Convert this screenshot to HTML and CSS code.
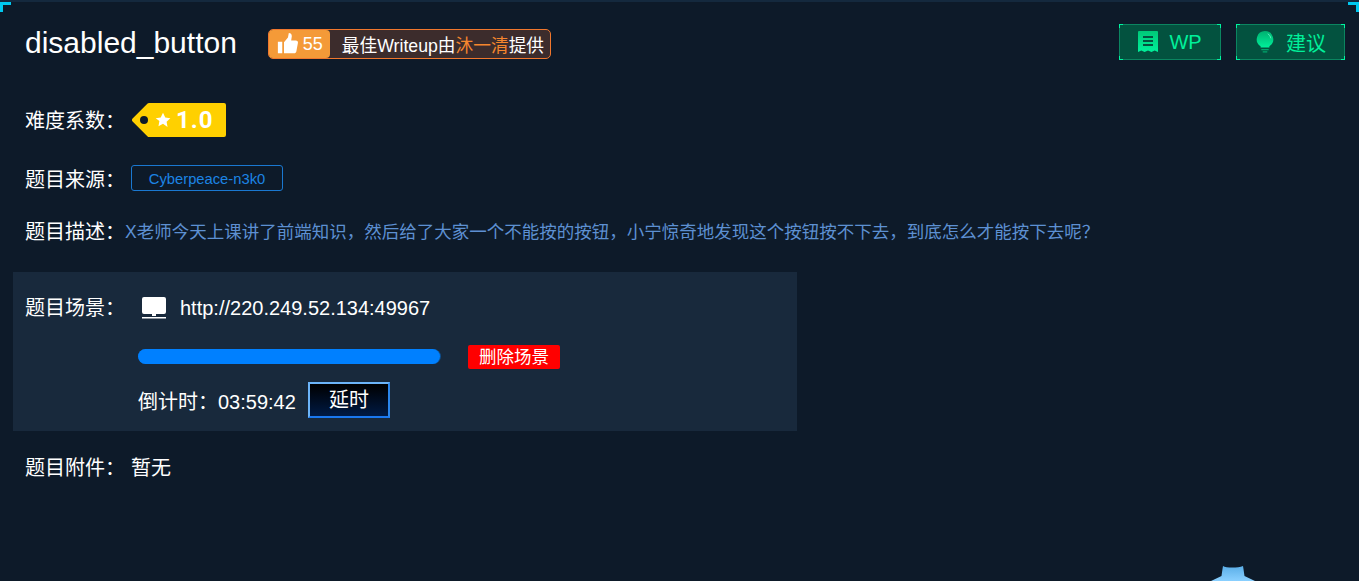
FILE: index.html
```html
<!DOCTYPE html>
<html lang="zh-CN">
<head>
    <meta charset="UTF-8">
    <title>disabled_button</title>
    <link rel="stylesheet" href="styles.css">
</head>
<body>
    <div class="panel">
        <span class="corner corner-left"></span>
        <span class="corner corner-right"></span>

        <header class="head">
            <h1>disabled_button</h1>
            <div class="best">
                <span class="best-like">
                    <svg class="thumb" viewBox="0 0 24 24"><path d="M1 10h5v13H1zM8 10.500l4.500-5.500 1-5c2.500 0 3.800 2 3.300 4.500L16.200 8.500h5.300c1.800 0 2.700 1.300 2.400 3l-1.800 9.500c-.3 1.300-1.200 2-2.500 2H8z"/></svg>
                    55
                </span>
                <span class="best-text">最佳Writeup由<em>沐一清</em>提供</span>
            </div>
            <div class="head-btns">
                <a class="green-btn btn-wp">
                    <i></i><i></i><i></i><i></i>
                    <svg class="green-icon" viewBox="0 0 20 22"><defs><linearGradient id="g1" x1="0" y1="0" x2="0" y2="1"><stop offset="0" stop-color="#00c878"/><stop offset="1" stop-color="#00f09a"/></linearGradient></defs><path fill="url(#g1)" fill-rule="evenodd" d="M0 1a1 1 0 0 1 1-1h18a1 1 0 0 1 1 1v20l-3.300-1.500-3.300 1.500-3.400-1.500-3.400 1.500-3.300-1.500L0 21zM5 5v2h10V5zM5 9v2h10V9zM5 13v2h10v-2z"/></svg>
                    WP
                </a>
                <a class="green-btn btn-tip">
                    <i></i><i></i><i></i><i></i>
                    <svg class="green-icon" viewBox="0 0 20 24"><defs><linearGradient id="g2" x1="0" y1="0" x2="0" y2="1"><stop offset="0" stop-color="#00b070"/><stop offset="1" stop-color="#00f09a"/></linearGradient></defs><path fill="url(#g2)" d="M10 0a9 9 0 0 1 4.800 16.600V18H5.200v-1.400A9 9 0 0 1 10 0z"/><path fill="none" stroke="#5ff0c0" stroke-width="1" d="M13 3a6.500 6.500 0 0 1 3.400 5"/><path fill="#00a86c" d="M6 19.500h8V21H6zM7.500 22h5v1.500h-5z"/></svg>
                    建议
                </a>
            </div>
        </header>

        <div class="row row-level">
            <span class="label">难度系数：</span>
            <span class="tag-level">
                <svg class="tag-shape" viewBox="0 0 94 34"><path fill="#ffd000" stroke="#ffd000" stroke-width="4" stroke-linejoin="round" d="M2 17L17 2H92V32H17z"/><circle cx="12" cy="17" r="4" fill="#0d1a29"/></svg>
                <svg class="star" viewBox="0 0 24 24"><path d="M12 1l3.400 7.200 7.600 1-5.600 5.400 1.400 7.900L12 17.700l-6.800 3.800 1.400-7.900L1 9.200l7.600-1z"/></svg>
                <span class="tag-num">1.0</span>
            </span>
        </div>

        <div class="row row-source">
            <span class="label">题目来源：</span>
            <span class="source">Cyberpeace-n3k0</span>
        </div>

        <div class="row row-desc">
            <span class="label">题目描述：</span>
            <span class="desc">X老师今天上课讲了前端知识，然后给了大家一个不能按的按钮，小宁惊奇地发现这个按钮按不下去，到底怎么才能按下去呢？</span>
        </div>

        <div class="scene">
            <span class="label">题目场景：</span>
            <div class="scene-body">
                <div class="scene-url">
                    <svg class="screen" viewBox="0 0 24 22"><path d="M2 0h20a2 2 0 0 1 2 2v13a2 2 0 0 1-2 2H14v2h-4v-2H2a2 2 0 0 1-2-2V2a2 2 0 0 1 2-2zM0 20h24v1.500H0z"/></svg>
                    <span>http://220.249.52.134:49967</span>
                </div>
                <div class="scene-progress">
                    <div class="bar"><div class="bar-fill"></div></div>
                    <span class="del">删除场景</span>
                </div>
                <div class="scene-time">
                    <span>倒计时：03:59:42</span>
                    <span class="delay">延时</span>
                </div>
            </div>
        </div>

        <div class="row row-files">
            <span class="label">题目附件：</span>
            <span class="files">暂无</span>
        </div>

        <svg class="badge" viewBox="0 0 44 15"><defs><linearGradient id="g3" x1="0" y1="0" x2="0" y2="1"><stop offset="0" stop-color="#5aaee8"/><stop offset="1" stop-color="#8ad0ff"/></linearGradient></defs><path fill="url(#g3)" d="M12 0c3 2 15 2 20 0 .6 3 1 7 1.500 10L44 15H0l10.500-5C11 7 11.400 3 12 0z"/></svg>
    </div>
</body>
</html>
```

FILE: styles.css
```css
* {
    margin: 0;
    padding: 0;
    box-sizing: border-box;
}

html, body {
    height: 100%;
    overflow: hidden;
}

body {
    background: #0d1a29;
    color: #fff;
    font-family: "Liberation Sans", "Noto Sans CJK SC", sans-serif;
    font-size: 20px;
}

.panel {
    position: relative;
    height: 581px;
    padding: 1px 13px 0;
    border-top: 2px solid #14293e;
}

.corner {
    position: absolute;
    top: 0;
    width: 11px;
    height: 10px;
    border-top: 3px solid #00c8f0;
}

.corner-left {
    left: 0;
    border-left: 3px solid #00c8f0;
}

.corner-right {
    right: 0;
    border-right: 3px solid #00c8f0;
}

/* header */
.head {
    display: flex;
    align-items: flex-start;
    height: 98px;
    padding-left: 12px;
}

.head h1 {
    font-size: 30px;
    font-weight: normal;
    margin-top: 23px;
    margin-right: 31px;
}

.best {
    display: flex;
    align-items: center;
    width: 283px;
    height: 30px;
    margin-top: 26px;
    background: #3c2c2c;
    border: 1px solid #f0772d;
    border-radius: 5px;
    overflow: hidden;
}

.best-like {
    display: flex;
    align-items: center;
    width: 61px;
    height: 100%;
    padding-left: 8px;
    background: #f49a38;
    border-radius: 0 4px 4px 0;
    font-size: 18px;
    gap: 5px;
}

.thumb {
    width: 21px;
    height: 21px;
    fill: #fff;
    margin-bottom: 2px;
}

.best-text {
    margin-left: 12px;
    font-size: 17.7px;
    white-space: nowrap;
}

.best-text em {
    font-style: normal;
    color: #f5862e;
}

.head-btns {
    display: flex;
    gap: 15px;
    margin-left: auto;
    margin-top: 21px;
    margin-right: 1px;
}

.green-btn {
    position: relative;
    display: flex;
    align-items: center;
    justify-content: center;
    gap: 11px;
    height: 36px;
    background: #03523f;
    border: 1px solid #0b8560;
    color: #00f09a;
    font-size: 20px;
}

.btn-wp {
    width: 102px;
}

.btn-tip {
    width: 109px;
}

.green-btn i {
    position: absolute;
    width: 4px;
    height: 4px;
    border: 0 solid #00f5a0;
}

.green-btn i:nth-child(1) { top: -1px; left: -1px; border-width: 1px 0 0 1px; }
.green-btn i:nth-child(2) { top: -1px; right: -1px; border-width: 1px 1px 0 0; }
.green-btn i:nth-child(3) { bottom: -1px; left: -1px; border-width: 0 0 1px 1px; }
.green-btn i:nth-child(4) { bottom: -1px; right: -1px; border-width: 0 1px 1px 0; }

.green-icon {
    width: 20px;
    height: 22px;
}

/* rows */
.row {
    display: flex;
    align-items: center;
    padding-left: 12px;
}

.label {
    flex-shrink: 0;
    width: 106px;
    color: #fff;
}

.row-level {
    height: 36px;
}

.tag-level {
    position: relative;
    display: flex;
    align-items: center;
    gap: 5px;
    width: 94px;
    height: 34px;
    margin-left: 1px;
    margin-top: 2px;
    padding-left: 23px;
}

.tag-shape {
    position: absolute;
    left: 0;
    top: 0;
    width: 94px;
    height: 34px;
}

.tag-num {
    position: relative;
    font-family: Roboto, sans-serif;
    font-size: 24px;
    font-weight: bold;
    letter-spacing: 1px;
}

.star {
    position: relative;
    width: 16px;
    height: 16px;
    fill: #fff;
}

.row-source {
    height: 28px;
    margin-top: 27px;
}

.source {
    width: 152px;
    height: 26px;
    line-height: 26px;
    text-align: center;
    border: 1px solid #1a78d0;
    border-radius: 3px;
    color: #1c84e4;
    font-size: 14.75px;
}

.row-desc {
    height: 28px;
    margin-top: 24px;
}

.row-desc .label {
    width: 100px;
}

.desc {
    color: #5d90d2;
    font-size: 17.5px;
    white-space: nowrap;
}

/* scene box */
.scene {
    display: flex;
    width: 784px;
    height: 159px;
    margin-top: 28px;
    padding: 20px 12px 0;
    background: #18293c;
}

.scene .label {
    width: 113px;
    line-height: 32px;
}

.scene-body {
    display: flex;
    flex-direction: column;
}

.scene-url {
    display: flex;
    align-items: center;
    gap: 14px;
    height: 32px;
    padding-left: 4px;
}

.screen {
    width: 24px;
    height: 22px;
    fill: #fff;
}

.scene-progress {
    display: flex;
    align-items: center;
    gap: 27px;
    margin-top: 21px;
}

.bar {
    width: 303px;
    height: 15px;
    margin-bottom: 1px;
    background: #0d4f8f;
    border-radius: 8px;
}

.bar-fill {
    width: 302px;
    height: 15px;
    background: #0080ff;
    border-radius: 8px;
}

.del {
    width: 92px;
    height: 24px;
    line-height: 24px;
    text-align: center;
    background: #ff0000;
    border-radius: 2px;
    font-size: 17.5px;
}

.scene-time {
    display: flex;
    align-items: center;
    gap: 12px;
    margin-top: 13px;
}

.scene-time span:first-child {
    width: 158px;
    white-space: nowrap;
}

.delay {
    width: 82px;
    height: 36px;
    line-height: 32px;
    text-align: center;
    background: linear-gradient(#000, #001a44);
    border: 2px solid;
    border-color: #6cb4f8 #2a86ec #1a78f0 #6cb4f8;
}

.row-files {
    height: 28px;
    margin-top: 21px;
}

.badge {
    position: absolute;
    left: 1211px;
    bottom: 0;
    width: 44px;
    height: 15px;
}
```
